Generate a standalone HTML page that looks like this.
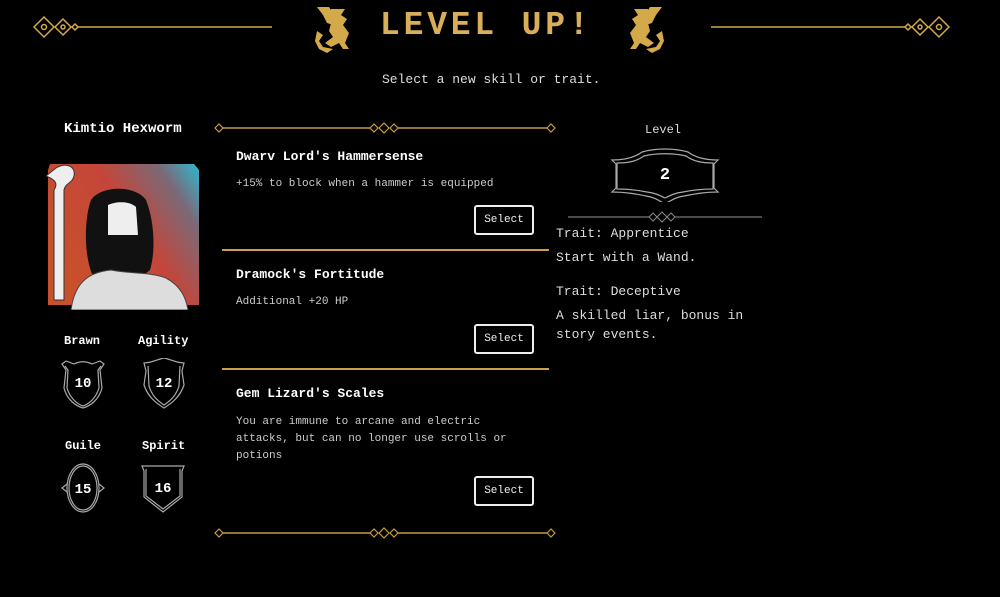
<!DOCTYPE html>
<html><head><meta charset="utf-8">
<style>
*{margin:0;padding:0;box-sizing:border-box}
body{width:1000px;height:597px;background:#000;color:#ddd;font-family:"Liberation Mono","DejaVu Sans Mono",monospace;position:relative;overflow:hidden}
.a{position:absolute}
.t{position:absolute;white-space:nowrap}
.b{font-weight:bold;color:#fff}
.btn{position:absolute;width:60px;height:30px;border:2px solid #eee;border-radius:3px;color:#eee;font-size:11px;text-align:center;line-height:26px}
.sep{position:absolute;height:2px;background:#caa04a}
.title{position:absolute;left:380px;top:8px;font-family:"Liberation Mono",monospace;font-size:33px;color:#d8ae5a;letter-spacing:3.8px;font-weight:bold;line-height:36px}
</style></head><body>

<svg class="a" style="left:30px;top:14px" width="245" height="26" viewBox="0 0 245 26">
<g fill="none" stroke="#d4a94a" stroke-width="1.5">
<path d="M4 13 L14 3 L24 13 L14 23Z"/><circle cx="14" cy="13" r="2.5"/>
<path d="M25 13 L33 5 L41 13 L33 21Z"/><circle cx="33" cy="13" r="2"/>
<path d="M45 10 L48 13 L45 16 L42 13Z"/>
</g><line x1="48" y1="13" x2="242" y2="13" stroke="#d4a94a" stroke-width="1.5"/>
</svg>
<svg class="a" style="left:708px;top:14px;transform:scaleX(-1)" width="245" height="26" viewBox="0 0 245 26">
<g fill="none" stroke="#d4a94a" stroke-width="1.5">
<path d="M4 13 L14 3 L24 13 L14 23Z"/><circle cx="14" cy="13" r="2.5"/>
<path d="M25 13 L33 5 L41 13 L33 21Z"/><circle cx="33" cy="13" r="2"/>
<path d="M45 10 L48 13 L45 16 L42 13Z"/>
</g><line x1="48" y1="13" x2="242" y2="13" stroke="#d4a94a" stroke-width="1.5"/>
</svg>

<svg class="a" style="left:315px;top:5px" width="48" height="48" viewBox="0 0 48 48">
<g fill="#d4a94a"><path d="M2 2h12l4 6v12l-6-2-4-8z"/><path d="M16 4h14l-4 6 6 4-4 6 6 8-4 10 4 6h-6l-4-6-8 4-6-4 8-6-4-6 2-8z"/><path d="M2 26l6 4-4 6 4 6 10 2-6 4-8-4-4-8z"/></g>
</svg>
<svg class="a" style="left:616px;top:5px;transform:scaleX(-1)" width="48" height="48" viewBox="0 0 48 48">
<g fill="#d4a94a"><path d="M2 2h12l4 6v12l-6-2-4-8z"/><path d="M16 4h14l-4 6 6 4-4 6 6 8-4 10 4 6h-6l-4-6-8 4-6-4 8-6-4-6 2-8z"/><path d="M2 26l6 4-4 6 4 6 10 2-6 4-8-4-4-8z"/></g>
</svg>
<div class="title">LEVEL UP!</div>

<div class="t" style="left:382px;top:72px;font-size:13px;color:#ddd">Select a new skill or trait.</div>

<div class="t b" style="left:64px;top:121px;font-size:14px">Kimtio Hexworm</div>
<svg class="a" style="left:46px;top:160px" width="155" height="150" viewBox="0 0 155 150">
<defs><linearGradient id="g" x1="0" y1="0.6" x2="1" y2="0"><stop offset="0" stop-color="#c8502a"/><stop offset="0.5" stop-color="#c4463a"/><stop offset="0.8" stop-color="#7a6a78"/><stop offset="1" stop-color="#30b8d0"/></linearGradient></defs>
<path d="M4 4H148L153 10V145H2V10Z" fill="url(#g)"/>
<path d="M10 8c10-6 20-2 18 8-2 8-8 6-10 14v110h-10V30c4-6 2-10-8-14z" fill="#eee" stroke="#333"/>
<path d="M45 40c10-15 45-15 55 0 8 20 10 50 4 70-10 10-40 14-58 4-8-20-8-55-1-74z" fill="#111"/>
<path d="M62 45c8-4 22-4 28 2l2 28-30 0z" fill="#eee"/>
<path d="M58 78c10 6 30 6 36 0l-2 30c-8 8-24 8-32 0z" fill="#111"/>
<path d="M25 150c4-30 20-38 40-40 20 4 40 2 55 8 15 8 20 20 22 32z" fill="#ddd" stroke="#444"/>
</svg>

<div class="t b" style="left:64px;top:334px;font-size:12px">Brawn</div>
<div class="t b" style="left:138px;top:334px;font-size:12px">Agility</div>
<div class="t b" style="left:65px;top:439px;font-size:12px">Guile</div>
<div class="t b" style="left:142px;top:439px;font-size:12px">Spirit</div>

<svg class="a" style="left:58px;top:358px" width="50" height="52" viewBox="0 0 50 52"><g fill="none" stroke="#aaa" stroke-width="1.2"><path d="M4 6l4-3 8 3c6-3 12-3 18 0l8-3 4 3-4 6 2 18c-3 12-12 18-19 20-7-2-16-8-19-20l2-18z"/><path d="M7 8l3 4-1 18c3 10 10 16 16 18 6-2 13-8 16-18l-1-18 3-4"/></g><text x="25" y="29" fill="#fff" font-size="14" font-weight="bold" text-anchor="middle" font-family="Liberation Mono">10</text></svg>
<svg class="a" style="left:139px;top:358px" width="50" height="52" viewBox="0 0 50 52"><g fill="none" stroke="#aaa" stroke-width="1.2"><path d="M5 5c8 0 14-4 20-5 6 1 12 5 20 5l-2 8 2 14c-4 12-12 18-20 23-8-5-16-11-20-23l2-14z"/><path d="M9 8l1 20c3 10 9 15 15 19 6-4 12-9 15-19l1-20"/></g><text x="25" y="29" fill="#fff" font-size="14" font-weight="bold" text-anchor="middle" font-family="Liberation Mono">12</text></svg>
<svg class="a" style="left:60px;top:462px" width="46" height="52" viewBox="0 0 46 52"><g fill="none" stroke="#aaa" stroke-width="1.2"><ellipse cx="23" cy="26" rx="16" ry="24"/><ellipse cx="23" cy="26" rx="14" ry="22"/><path d="M7 22l-5 4 5 4M39 22l5 4-5 4"/></g><text x="23" y="31" fill="#fff" font-size="14" font-weight="bold" text-anchor="middle" font-family="Liberation Mono">15</text></svg>
<svg class="a" style="left:139px;top:462px" width="48" height="52" viewBox="0 0 48 52"><g fill="none" stroke="#aaa" stroke-width="1.2"><path d="M3 4h42l-2 5v26l-19 15-19-15V9z"/><path d="M7 7v27l17 13 17-13V7"/></g><text x="24" y="30" fill="#fff" font-size="14" font-weight="bold" text-anchor="middle" font-family="Liberation Mono">16</text></svg>

<svg class="a" style="left:212px;top:121px" width="346" height="14" viewBox="0 0 346 14"><g fill="none" stroke="#c49a45" stroke-width="1.2"><path d="M3 7l4-4 4 4-4 4z"/><path d="M335 7l4-4 4 4-4 4z"/><path d="M158 7l4-4 4 4-4 4zM167 7l5-5 5 5-5 5zM178 7l4-4 4 4-4 4z"/></g><line x1="11" y1="7" x2="158" y2="7" stroke="#c49a45" stroke-width="1.5"/><line x1="186" y1="7" x2="335" y2="7" stroke="#c49a45" stroke-width="1.5"/></svg>

<div class="t b" style="left:236px;top:149px;font-size:13px">Dwarv Lord's Hammersense</div>
<div class="t" style="left:236px;top:178px;font-size:11px;color:#ccc">+15% to block when a hammer is equipped</div>
<div class="btn" style="left:474px;top:205px">Select</div>
<div class="sep" style="left:222px;top:249px;width:327px"></div>

<div class="t b" style="left:236px;top:267px;font-size:13px">Dramock's Fortitude</div>
<div class="t" style="left:236px;top:296px;font-size:11px;color:#ccc">Additional +20 HP</div>
<div class="btn" style="left:474px;top:324px">Select</div>
<div class="sep" style="left:222px;top:368px;width:327px"></div>

<div class="t b" style="left:236px;top:386px;font-size:13px">Gem Lizard's Scales</div>
<div class="a" style="left:236px;top:414px;font-size:11px;color:#ccc;line-height:17px;width:320px">You are immune to arcane and electric<br>attacks, but can no longer use scrolls or<br>potions</div>
<div class="btn" style="left:474px;top:476px">Select</div>

<svg class="a" style="left:212px;top:526px" width="346" height="14" viewBox="0 0 346 14"><g fill="none" stroke="#c49a45" stroke-width="1.2"><path d="M3 7l4-4 4 4-4 4z"/><path d="M335 7l4-4 4 4-4 4z"/><path d="M158 7l4-4 4 4-4 4zM167 7l5-5 5 5-5 5zM178 7l4-4 4 4-4 4z"/></g><line x1="11" y1="7" x2="158" y2="7" stroke="#c49a45" stroke-width="1.5"/><line x1="186" y1="7" x2="335" y2="7" stroke="#c49a45" stroke-width="1.5"/></svg>

<div class="t" style="left:645px;top:123px;font-size:12px;color:#ddd">Level</div>
<svg class="a" style="left:606px;top:146px" width="118" height="56" viewBox="0 0 118 56"><g fill="none" stroke="#aaa" stroke-width="1.2"><path d="M6 14c12 0 22-2 30-8 14-4 32-4 46 0 8 6 18 8 30 8l-4 4v24l4 4c-14 0-24 2-34 4-8 1-12 4-19 8-7-4-11-7-19-8-10-2-20-4-34-4l4-4V18z"/><path d="M11 17c12 0 20-2 27-7 12-3 30-3 42 0 7 5 15 7 27 7v26c-12 0-20 1-30 3-8 1-12 3-18 6-6-3-10-5-18-6-10-2-18-3-30-3z"/></g><text x="59" y="33" fill="#fff" font-size="17" font-weight="bold" text-anchor="middle" font-family="Liberation Mono">2</text></svg>
<svg class="a" style="left:566px;top:211px" width="198" height="12" viewBox="0 0 198 12"><line x1="2" y1="6" x2="196" y2="6" stroke="#777" stroke-width="1.2"/><g fill="#000" stroke="#888"><path d="M83 6l4-4 4 4-4 4z"/><path d="M91 6l5-5 5 5-5 5z"/><path d="M101 6l4-4 4 4-4 4z"/></g></svg>

<div class="a" style="left:556px;top:224px;font-size:13px;color:#ddd;line-height:19px">
<div>Trait: Apprentice</div>
<div style="margin-top:5px">Start with a Wand.</div>
<div style="margin-top:15px">Trait: Deceptive</div>
<div style="margin-top:5px">A skilled liar, bonus in<br>story events.</div>
</div>
</body></html>
